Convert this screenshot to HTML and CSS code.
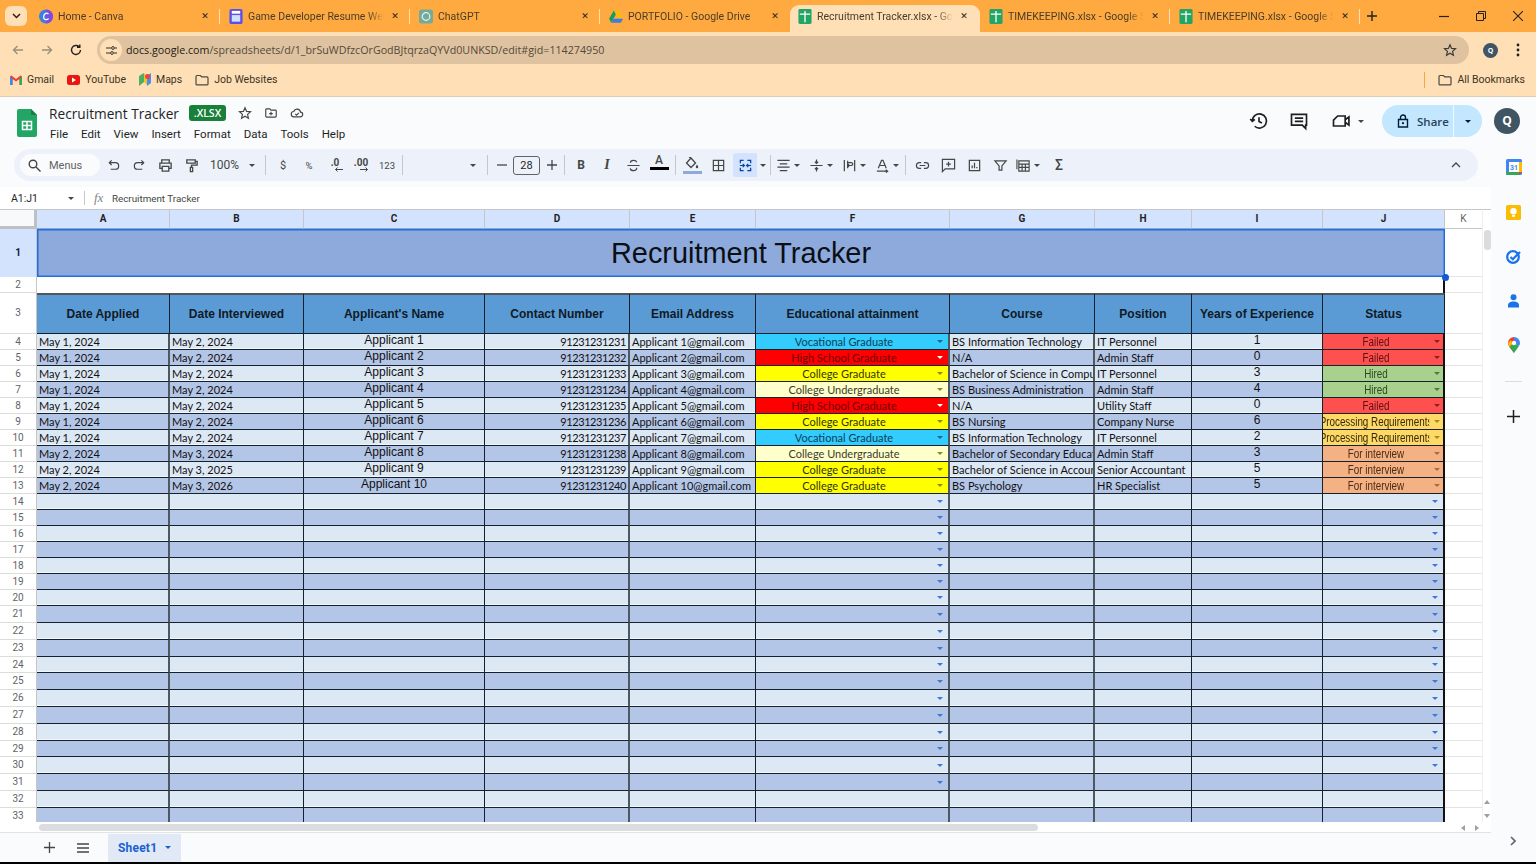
FILE: index.html
```html
<!DOCTYPE html>
<html lang="en">
<head>
    <meta charset="UTF-8">
    <title>Recruitment Tracker.xlsx - Google Sheets</title>
    <link rel="stylesheet" href="styles.css">
</head>
<body>
    <svg class="sprite" width="0" height="0">
        <symbol id="sheet-fav" viewBox="0 0 14 16"><rect width="14" height="16" rx="1.500" fill="#23a566"/><path d="M1.500 5.500h11M7 2v12" stroke="#fff" stroke-width="1.400" fill="none"/></symbol>
        <symbol id="folder" viewBox="0 0 14 12"><path d="M1 2.500c0-.6.4-1 1-1h3.400l1.300 1.400H12c.6 0 1 .4 1 1v6c0 .6-.4 1-1 1H2c-.6 0-1-.4-1-1z" fill="none" stroke="#4a4a44" stroke-width="1.200"/></symbol>
    </svg>

    <!-- browser chrome -->
    <div class="tabstrip">
        <div class="tab-menu"><svg width="9" height="6" viewBox="0 0 9 6"><path d="M1 1l3.500 3.500L8 1" fill="none" stroke="#222" stroke-width="1.500"/></svg></div>
        <div class="tab">
            <svg class="fav" viewBox="0 0 14 14"><circle cx="7" cy="7" r="7" fill="#3d7fe0"/><path d="M7 0a7 7 0 0 1 0 14z" fill="#7d4be0"/><path d="M9.400 4.600C8.400 3 5 3.400 4.600 7c-.3 3 3 4.200 5 2" fill="none" stroke="#fff" stroke-width="1.200"/></svg>
            <span class="tab-title">Home - Canva</span><span class="tab-x">✕</span>
        </div>
        <div class="tab">
            <svg class="fav" viewBox="0 0 14 16"><rect width="14" height="16" rx="2" fill="#5b4fe8"/><rect x="2.500" y="2" width="9" height="3" fill="#fff"/><rect x="2.500" y="6.500" width="9" height="7" fill="#cfe0ff"/></svg>
            <span class="tab-title">Game Developer Resume Website</span><span class="tab-x">✕</span>
        </div>
        <div class="tab">
            <svg class="fav" viewBox="0 0 14 14"><rect width="14" height="14" rx="2.500" fill="#74aa9c"/><circle cx="7" cy="7" r="3.800" fill="none" stroke="#e6f2ee" stroke-width="1.200"/></svg>
            <span class="tab-title">ChatGPT</span><span class="tab-x">✕</span>
        </div>
        <div class="tab no-line">
            <svg class="fav" viewBox="0 0 16 14"><path d="M5.500 0h5l5 9h-5z" fill="#fbbc04"/><path d="M5.500 0L0 9.500 2.500 14l5.300-9.300z" fill="#1a9c5b"/><path d="M2.500 14h11l2.500-4.500H5.200z" fill="#3b7de8"/></svg>
            <span class="tab-title">PORTFOLIO - Google Drive</span><span class="tab-x">✕</span>
        </div>
        <div class="tab active">
            <svg class="fav"><use href="#sheet-fav"/></svg>
            <span class="tab-title">Recruitment Tracker.xlsx - Google Sheets</span><span class="tab-x">✕</span>
        </div>
        <div class="tab">
            <svg class="fav"><use href="#sheet-fav"/></svg>
            <span class="tab-title">TIMEKEEPING.xlsx - Google Sheets</span><span class="tab-x">✕</span>
        </div>
        <div class="tab">
            <svg class="fav"><use href="#sheet-fav"/></svg>
            <span class="tab-title">TIMEKEEPING.xlsx - Google Sheets</span><span class="tab-x">✕</span>
        </div>
        <svg class="new-tab" width="10" height="10" viewBox="0 0 10 10"><path d="M5 0v10M0 5h10" stroke="#222" stroke-width="1.400"/></svg>
        <div class="win-ctrls">
            <svg width="10" height="10" viewBox="0 0 10 10"><path d="M0 5.500h10" stroke="#222" stroke-width="1.200"/></svg>
            <svg width="10" height="10" viewBox="0 0 10 10"><path d="M.5 2.500h7v7h-7zM2.500 2.500v-2h7v7h-2" fill="none" stroke="#222"/></svg>
            <svg width="10" height="10" viewBox="0 0 10 10"><path d="M0 0l10 10M10 0L0 10" stroke="#222" stroke-width="1.100"/></svg>
        </div>
    </div>

    <div class="navbar">
        <svg class="nav-ico" viewBox="0 0 12 12"><path d="M11 6H1.500M5.500 2L1.500 6l4 4" fill="none" stroke="#9a8f7e" stroke-width="1.400"/></svg>
        <svg class="nav-ico" viewBox="0 0 12 12"><path d="M1 6h9.500M6.500 2l4 4-4 4" fill="none" stroke="#9a8f7e" stroke-width="1.400"/></svg>
        <svg class="nav-ico" viewBox="0 0 12 12"><path d="M10.500 6a4.500 4.500 0 1 1-1.400-3.300M9.800 .6v2.700H7" fill="none" stroke="#222" stroke-width="1.400"/></svg>
        <div class="omnibox">
            <span class="site-btn"><svg width="11" height="9" viewBox="0 0 11 9"><path d="M0 2h5M8 7h3M0 7h4M9 2h2" stroke="#333" stroke-width="1.200"/><circle cx="7" cy="2" r="1.400" fill="none" stroke="#333"/><circle cx="6" cy="7" r="1.400" fill="none" stroke="#333"/></svg></span>
            <span class="url"><b>docs.google.com</b>/spreadsheets/d/1_brSuWDfzcOrGodBJtqrzaQYVd0UNKSD/edit#gid=114274950</span>
            <svg class="url-star" width="14" height="14" viewBox="0 0 24 24"><path d="M12 3l2.700 6.200 6.800.6-5.100 4.500 1.500 6.600L12 17.400l-5.900 3.500 1.500-6.600L2.500 9.800l6.800-.6z" fill="none" stroke="#3a3a3a" stroke-width="2"/></svg>
        </div>
        <span class="chrome-avatar">Q</span>
        <svg class="chrome-more" width="4" height="14" viewBox="0 0 4 14"><circle cx="2" cy="2" r="1.400"/><circle cx="2" cy="7" r="1.400"/><circle cx="2" cy="12" r="1.400"/></svg>
    </div>

    <div class="bookmarks">
        <span class="bm"><svg width="12" height="10" viewBox="0 0 12 10"><path d="M0 1.500V10h2.500V4L6 6.500 9.500 4v6H12V1.500L10.500.5 6 4 1.500.5z" fill="#ea4335"/><path d="M0 1.500V10h2.500V4z" fill="#4285f4"/><path d="M12 1.500V10H9.500V4z" fill="#34a853"/></svg>Gmail</span>
        <span class="bm"><svg width="13" height="10" viewBox="0 0 13 10"><rect width="13" height="10" rx="2.500" fill="#e8160f"/><path d="M5 2.500L9 5 5 7.500z" fill="#fff"/></svg>YouTube</span>
        <span class="bm"><svg width="12" height="14" viewBox="0 0 12 14"><path d="M0 3l5-3v9l-5 4z" fill="#4caf62"/><path d="M5 0l3 3v9L5 9z" fill="#f2c230"/><path d="M8 3l4-3v10l-4 3z" fill="#4a8cf0"/><circle cx="8.500" cy="3.500" r="2.500" fill="#e8453c"/></svg>Maps</span>
        <span class="bm"><svg width="14" height="12"><use href="#folder"/></svg>Job Websites</span>
        <span class="bm-sep"></span>
        <span class="bm"><svg width="14" height="12"><use href="#folder"/></svg>All Bookmarks</span>
    </div>

    <!-- sheets header -->
    <div class="app-head">
        <svg class="doc-icon" width="20" height="28" viewBox="0 0 20 28"><path d="M2 0h12l6 6v20a2 2 0 0 1-2 2H2a2 2 0 0 1-2-2V2a2 2 0 0 1 2-2z" fill="#23a566"/><path d="M14 0l6 6h-6z" fill="#188038"/><path d="M5.500 12.500h9v8h-9zM5.500 16.500h9M10 12.500v8" fill="none" stroke="#fff" stroke-width="1.500"/></svg>
        <div class="doc-info">
            <div class="doc-title-row">
                <span class="doc-title">Recruitment Tracker</span>
                <span class="xlsx">.XLSX</span>
                <svg class="head-ico" viewBox="0 0 24 24"><path d="M12 3l2.700 6.200 6.800.6-5.100 4.500 1.500 6.600L12 17.400l-5.900 3.500 1.500-6.600L2.500 9.800l6.800-.6z" fill="none" stroke="#444746" stroke-width="2"/></svg>
                <svg class="head-ico" viewBox="0 0 24 24"><path d="M3 6.500c0-.8.700-1.500 1.500-1.500H10l2 2h7.500c.8 0 1.500.7 1.500 1.500v9c0 .8-.7 1.500-1.500 1.500h-15C3.700 19 3 18.300 3 17.500zM9 13h6M12 10v6" fill="none" stroke="#444746" stroke-width="2"/></svg>
                <svg class="head-ico" viewBox="0 0 24 24"><path d="M7 18.500a4.500 4.500 0 0 1-.6-9A6 6 0 0 1 18 10.500a4 4 0 0 1-.5 8zM9 13.500l2.200 2.200 4-4" fill="none" stroke="#444746" stroke-width="2"/></svg>
            </div>
            <div class="menubar">
                <span>File</span><span>Edit</span><span>View</span><span>Insert</span><span>Format</span><span>Data</span><span>Tools</span><span>Help</span>
            </div>
        </div>
        <div class="head-right">
            <svg class="hr-ico" viewBox="0 0 24 24"><path d="M4 12a8.500 8.500 0 1 1 2.800 6.300M1.500 9.500L4 12.500l3-2.500M12 7.500V12.500l3.500 2" fill="none" stroke="#1f1f1f" stroke-width="2"/></svg>
            <svg class="hr-ico comment" viewBox="0 0 24 24"><path d="M3 4h18v13h-1v4l-4-4H3zM7 8.500h10M7 12.500h10" fill="none" stroke="#1f1f1f" stroke-width="2"/></svg>
            <svg class="hr-ico meet" viewBox="0 0 24 24"><path d="M8 6h9v12H3V11zM17 10.500l4.500-3.500v10L17 13.500" fill="none" stroke="#1f1f1f" stroke-width="2"/></svg>
            <i class="caret meet-caret"></i>
            <div class="share">
                <span class="share-main"><svg width="12" height="14" viewBox="0 0 12 14"><path d="M1.500 5.500h9v7.500h-9zM3.500 5.500V3.500a2.500 2.500 0 0 1 5 0v2" fill="none" stroke="#001d35" stroke-width="1.400"/><circle cx="6" cy="9.200" r="1.100" fill="#001d35"/></svg>Share</span>
                <span class="share-more"><i class="caret"></i></span>
            </div>
            <span class="avatar">Q</span>
        </div>
    </div>

    <div class="main">
        <div class="work">
            <div class="toolbar">
                <div class="search"><svg width="13" height="13" viewBox="0 0 13 13"><circle cx="5" cy="5" r="3.800" fill="none" stroke="#444746" stroke-width="1.400"/><path d="M8 8l4.500 4.500" stroke="#444746" stroke-width="1.400"/></svg>Menus</div>
                <span class="tb"><svg viewBox="0 0 16 16"><path d="M4 5h6a3 3 0 0 1 0 7H5M6 2.500L3.500 5 6 7.500" fill="none" stroke="#444746" stroke-width="1.300"/></svg></span>
                <span class="tb"><svg viewBox="0 0 16 16"><path d="M12 5H6a3 3 0 0 0 0 7h5M10 2.500L12.500 5 10 7.500" fill="none" stroke="#444746" stroke-width="1.300"/></svg></span>
                <span class="tb"><svg viewBox="0 0 16 16"><path d="M4 5V2h8v3M4 11H2V5.500h12V11h-2M4.500 9h7v5h-7z" fill="none" stroke="#444746" stroke-width="1.400"/></svg></span>
                <span class="tb"><svg viewBox="0 0 16 16"><path d="M3 2h9v3.500H3zM12 3.500h2v4H8V10M6.800 10h2.400v4.500H6.800z" fill="none" stroke="#444746" stroke-width="1.400"/></svg></span>
                <span class="tb zoom">100%<i class="caret"></i></span>
                <span class="tb-sep sep-a"></span>
                <span class="tb txt">$</span>
                <span class="tb txt small">%</span>
                <span class="tb txt dec">.0<svg width="9" height="5" viewBox="0 0 9 5"><path d="M9 2.500H1.500M3.500.5l-2 2 2 2" fill="none" stroke="#444746"/></svg></span>
                <span class="tb txt dec">.00<svg width="9" height="5" viewBox="0 0 9 5"><path d="M0 2.500h7.500M5.500.5l2 2-2 2" fill="none" stroke="#444746"/></svg></span>
                <span class="tb txt small">123</span>
                <span class="tb-sep"></span>
                <span class="font-pick"><i class="caret"></i></span>
                <span class="tb-sep sep-b"></span>
                <span class="tb step"><svg width="10" height="10" viewBox="0 0 10 10"><path d="M0 5h10" stroke="#444746" stroke-width="1.300"/></svg></span>
                <span class="size-box">28</span>
                <span class="tb step"><svg width="10" height="10" viewBox="0 0 10 10"><path d="M0 5h10M5 0v10" stroke="#444746" stroke-width="1.300"/></svg></span>
                <span class="tb-sep sep-c"></span>
                <span class="tb fmt bold">B</span>
                <span class="tb fmt ital">I</span>
                <span class="tb"><svg viewBox="0 0 16 16"><path d="M11.500 4.500C11 3 9.500 2.500 8 2.500S4.700 3.300 4.700 5M1.500 8h13M11.500 10.500c0 2-1.500 3-3.500 3s-3.300-1-3.500-2.500" fill="none" stroke="#444746" stroke-width="1.300"/></svg></span>
                <span class="tb fmt-a">A<i class="bar black"></i></span>
                <span class="tb-sep sep-c"></span>
                <span class="tb fill"><svg width="14" height="12" viewBox="0 0 14 12"><path d="M6 1L1.500 6 6 10.500 10.500 6zM4 0l2 1" fill="none" stroke="#444746" stroke-width="1.300"/><path d="M12 7.500c-1 1.500-1.200 2-1.200 2.500a1.200 1.200 0 0 0 2.400 0c0-.5-.2-1-1.200-2.500z" fill="#444746"/></svg><i class="bar blue"></i></span>
                <span class="tb"><svg viewBox="0 0 16 16"><path d="M2.500 2.500h11v11h-11zM8 2.500v11M2.500 8h11" fill="none" stroke="#444746" stroke-width="1.300"/></svg></span>
                <span class="tb merge"><svg viewBox="0 0 16 16"><path d="M6 2.500H2.500v3M10 2.500h3.500v3M6 13.500H2.500v-3M10 13.500h3.500v-3M2 8h4.500M5 6.300L6.800 8 5 9.700M14 8H9.500M11 6.300L9.200 8 11 9.700" fill="none" stroke="#0842a0" stroke-width="1.300"/></svg></span>
                <span class="tb-arrow merge-arrow"><i class="caret"></i></span>
                <span class="tb-sep sep-d"></span>
                <span class="tb with-caret"><svg viewBox="0 0 16 16"><path d="M1.500 2.500h13M4 6.200h8M1.500 9.800h13M4 13.500h8" fill="none" stroke="#444746" stroke-width="1.300"/></svg><i class="caret"></i></span>
                <span class="tb with-caret"><svg viewBox="0 0 16 16"><path d="M1.500 8h13M8 1.500v4M6.300 4L8 5.800 9.700 4M8 14.500v-4M6.300 12L8 10.200 9.700 12" fill="none" stroke="#444746" stroke-width="1.300"/></svg><i class="caret"></i></span>
                <span class="tb with-caret"><svg viewBox="0 0 16 16"><path d="M2.500 2v12M13.500 2v12M6 8h4a1.500 1.500 0 0 0 0-3H6M6 11V3M7.500 6.500L6 8l1.500 1.500" fill="none" stroke="#444746" stroke-width="1.300"/></svg><i class="caret"></i></span>
                <span class="tb with-caret"><svg viewBox="0 0 16 16"><path d="M3.500 11L7 2.500h1.500L12 11M5 8h5.500M2 14h11M11.500 12.500L13.500 14l-2 1.500" fill="none" stroke="#444746" stroke-width="1.300"/></svg><i class="caret"></i></span>
                <span class="tb-sep sep-e"></span>
                <span class="tb"><svg viewBox="0 0 16 16"><path d="M6.500 5H4.500a3 3 0 0 0 0 6h2M9.500 5h2a3 3 0 0 1 0 6h-2M5 8h6" fill="none" stroke="#444746" stroke-width="1.300"/></svg></span>
                <span class="tb"><svg viewBox="0 0 16 16"><path d="M1.500 1.500h13v10H4.500l-3 3zM8 4v5M5.500 6.500h5" fill="none" stroke="#444746" stroke-width="1.300"/></svg></span>
                <span class="tb"><svg viewBox="0 0 16 16"><path d="M2.500 2.500h11v11h-11zM5.500 11V8M8 11V5M10.500 11V9.500" fill="none" stroke="#444746" stroke-width="1.300"/></svg></span>
                <span class="tb"><svg viewBox="0 0 16 16"><path d="M2 3h12L9.500 8.500V13h-3V8.500z" fill="none" stroke="#444746" stroke-width="1.300"/></svg></span>
                <span class="tb with-caret func"><svg viewBox="0 0 16 16"><path d="M3 3h11v11H3zM3 6.500h11M6.500 6.500V14M10 6.500V14M3 10h11M1 1.500V12" fill="none" stroke="#444746" stroke-width="1.200"/></svg><i class="caret"></i></span>
                <span class="tb sigma">Σ</span>
                <svg class="collapse" width="10" height="6" viewBox="0 0 10 6"><path d="M1 5l4-4 4 4" fill="none" stroke="#444746" stroke-width="1.300"/></svg>
            </div>

            <div class="formula">
                <span class="name-box">A1:J1</span><i class="caret"></i>
                <span class="fx-sep"></span>
                <span class="fx">fx</span>
                <span class="formula-text">Recruitment Tracker</span>
            </div>

            <div class="grid-row">
                <div class="grid-wrap">
                    <table class="sheet">
                        <colgroup>
                            <col class="c0"><col class="ca"><col class="cb"><col class="cc"><col class="cd"><col class="ce"><col class="cf"><col class="cg"><col class="ch"><col class="ci"><col class="cj"><col class="ck">
                        </colgroup>
                        <tr class="cols">
                            <th class="corner"></th><th>A</th><th>B</th><th>C</th><th>D</th><th>E</th><th>F</th><th>G</th><th>H</th><th>I</th><th>J</th><th class="k">K</th>
                        </tr>
                        <tr class="r1"><th class="sel">1</th><td colspan="10" class="title-cell">Recruitment Tracker</td><td class="k"></td></tr>
                        <tr class="r2"><th>2</th><td colspan="10"></td><td class="k"></td></tr>
                        <tr class="r3"><th>3</th><td>Date Applied</td><td>Date Interviewed</td><td>Applicant's Name</td><td>Contact Number</td><td>Email Address</td><td>Educational attainment</td><td>Course</td><td>Position</td><td>Years of Experience</td><td>Status</td><td class="k"></td></tr>

                        <tr class="lt"><th>4</th><td class="s">May 1, 2024</td><td class="s">May 2, 2024</td><td class="a">Applicant 1</td><td class="s n">91231231231</td><td class="s">Applicant 1@gmail.com</td><td class="edu voc"><div class="dd"><span>Vocational Graduate</span><i class="caret"></i></div></td><td class="s">BS Information Technology</td><td class="s">IT Personnel</td><td class="a">1</td><td class="st failed"><div class="dd"><span>Failed</span><i class="caret"></i></div></td><td class="k"></td></tr>
                        <tr class="dk"><th>5</th><td class="s">May 1, 2024</td><td class="s">May 2, 2024</td><td class="a">Applicant 2</td><td class="s n">91231231232</td><td class="s">Applicant 2@gmail.com</td><td class="edu hs"><div class="dd"><span>High School Graduate</span><i class="caret"></i></div></td><td class="s">N/A</td><td class="s">Admin Staff</td><td class="a">0</td><td class="st failed"><div class="dd"><span>Failed</span><i class="caret"></i></div></td><td class="k"></td></tr>
                        <tr class="lt"><th>6</th><td class="s">May 1, 2024</td><td class="s">May 2, 2024</td><td class="a">Applicant 3</td><td class="s n">91231231233</td><td class="s">Applicant 3@gmail.com</td><td class="edu cg"><div class="dd"><span>College Graduate</span><i class="caret"></i></div></td><td class="s">Bachelor of Science in Computer Science</td><td class="s">IT Personnel</td><td class="a">3</td><td class="st hired"><div class="dd"><span>Hired</span><i class="caret"></i></div></td><td class="k"></td></tr>
                        <tr class="dk"><th>7</th><td class="s">May 1, 2024</td><td class="s">May 2, 2024</td><td class="a">Applicant 4</td><td class="s n">91231231234</td><td class="s">Applicant 4@gmail.com</td><td class="edu cu"><div class="dd"><span>College Undergraduate</span><i class="caret"></i></div></td><td class="s">BS Business Administration</td><td class="s">Admin Staff</td><td class="a">4</td><td class="st hired"><div class="dd"><span>Hired</span><i class="caret"></i></div></td><td class="k"></td></tr>
                        <tr class="lt"><th>8</th><td class="s">May 1, 2024</td><td class="s">May 2, 2024</td><td class="a">Applicant 5</td><td class="s n">91231231235</td><td class="s">Applicant 5@gmail.com</td><td class="edu hs"><div class="dd"><span>High School Graduate</span><i class="caret"></i></div></td><td class="s">N/A</td><td class="s">Utility Staff</td><td class="a">0</td><td class="st failed"><div class="dd"><span>Failed</span><i class="caret"></i></div></td><td class="k"></td></tr>
                        <tr class="dk"><th>9</th><td class="s">May 1, 2024</td><td class="s">May 2, 2024</td><td class="a">Applicant 6</td><td class="s n">91231231236</td><td class="s">Applicant 6@gmail.com</td><td class="edu cg"><div class="dd"><span>College Graduate</span><i class="caret"></i></div></td><td class="s">BS Nursing</td><td class="s">Company Nurse</td><td class="a">6</td><td class="st proc"><div class="dd"><span>Processing Requirements</span><i class="caret"></i></div></td><td class="k"></td></tr>
                        <tr class="lt"><th>10</th><td class="s">May 1, 2024</td><td class="s">May 2, 2024</td><td class="a">Applicant 7</td><td class="s n">91231231237</td><td class="s">Applicant 7@gmail.com</td><td class="edu voc"><div class="dd"><span>Vocational Graduate</span><i class="caret"></i></div></td><td class="s">BS Information Technology</td><td class="s">IT Personnel</td><td class="a">2</td><td class="st proc"><div class="dd"><span>Processing Requirements</span><i class="caret"></i></div></td><td class="k"></td></tr>
                        <tr class="dk"><th>11</th><td class="s">May 2, 2024</td><td class="s">May 3, 2024</td><td class="a">Applicant 8</td><td class="s n">91231231238</td><td class="s">Applicant 8@gmail.com</td><td class="edu cu"><div class="dd"><span>College Undergraduate</span><i class="caret"></i></div></td><td class="s">Bachelor of Secondary Education</td><td class="s">Admin Staff</td><td class="a">3</td><td class="st inter"><div class="dd"><span>For interview</span><i class="caret"></i></div></td><td class="k"></td></tr>
                        <tr class="lt"><th>12</th><td class="s">May 2, 2024</td><td class="s">May 3, 2025</td><td class="a">Applicant 9</td><td class="s n">91231231239</td><td class="s">Applicant 9@gmail.com</td><td class="edu cg"><div class="dd"><span>College Graduate</span><i class="caret"></i></div></td><td class="s">Bachelor of Science in Accountancy</td><td class="s">Senior Accountant</td><td class="a">5</td><td class="st inter"><div class="dd"><span>For interview</span><i class="caret"></i></div></td><td class="k"></td></tr>
                        <tr class="dk"><th>13</th><td class="s">May 2, 2024</td><td class="s">May 3, 2026</td><td class="a">Applicant 10</td><td class="s n">91231231240</td><td class="s">Applicant 10@gmail.com</td><td class="edu cg"><div class="dd"><span>College Graduate</span><i class="caret"></i></div></td><td class="s">BS Psychology</td><td class="s">HR Specialist</td><td class="a">5</td><td class="st inter"><div class="dd"><span>For interview</span><i class="caret"></i></div></td><td class="k"></td></tr>

                        <tr class="lt"><th>14</th><td></td><td></td><td></td><td></td><td></td><td><div class="dd"><span></span><i class="caret"></i></div></td><td></td><td></td><td></td><td><div class="dd"><span></span><i class="caret"></i></div></td><td class="k"></td></tr>
                        <tr class="dk"><th>15</th><td></td><td></td><td></td><td></td><td></td><td><div class="dd"><span></span><i class="caret"></i></div></td><td></td><td></td><td></td><td><div class="dd"><span></span><i class="caret"></i></div></td><td class="k"></td></tr>
                        <tr class="lt"><th>16</th><td></td><td></td><td></td><td></td><td></td><td><div class="dd"><span></span><i class="caret"></i></div></td><td></td><td></td><td></td><td><div class="dd"><span></span><i class="caret"></i></div></td><td class="k"></td></tr>
                        <tr class="dk"><th>17</th><td></td><td></td><td></td><td></td><td></td><td><div class="dd"><span></span><i class="caret"></i></div></td><td></td><td></td><td></td><td><div class="dd"><span></span><i class="caret"></i></div></td><td class="k"></td></tr>
                        <tr class="lt"><th>18</th><td></td><td></td><td></td><td></td><td></td><td><div class="dd"><span></span><i class="caret"></i></div></td><td></td><td></td><td></td><td><div class="dd"><span></span><i class="caret"></i></div></td><td class="k"></td></tr>
                        <tr class="dk"><th>19</th><td></td><td></td><td></td><td></td><td></td><td><div class="dd"><span></span><i class="caret"></i></div></td><td></td><td></td><td></td><td><div class="dd"><span></span><i class="caret"></i></div></td><td class="k"></td></tr>
                        <tr class="lt"><th>20</th><td></td><td></td><td></td><td></td><td></td><td><div class="dd"><span></span><i class="caret"></i></div></td><td></td><td></td><td></td><td><div class="dd"><span></span><i class="caret"></i></div></td><td class="k"></td></tr>
                        <tr class="dk tall"><th>21</th><td></td><td></td><td></td><td></td><td></td><td><div class="dd"><span></span><i class="caret"></i></div></td><td></td><td></td><td></td><td><div class="dd"><span></span><i class="caret"></i></div></td><td class="k"></td></tr>
                        <tr class="lt tall"><th>22</th><td></td><td></td><td></td><td></td><td></td><td><div class="dd"><span></span><i class="caret"></i></div></td><td></td><td></td><td></td><td><div class="dd"><span></span><i class="caret"></i></div></td><td class="k"></td></tr>
                        <tr class="dk tall"><th>23</th><td></td><td></td><td></td><td></td><td></td><td><div class="dd"><span></span><i class="caret"></i></div></td><td></td><td></td><td></td><td><div class="dd"><span></span><i class="caret"></i></div></td><td class="k"></td></tr>
                        <tr class="lt"><th>24</th><td></td><td></td><td></td><td></td><td></td><td><div class="dd"><span></span><i class="caret"></i></div></td><td></td><td></td><td></td><td><div class="dd"><span></span><i class="caret"></i></div></td><td class="k"></td></tr>
                        <tr class="dk tall"><th>25</th><td></td><td></td><td></td><td></td><td></td><td><div class="dd"><span></span><i class="caret"></i></div></td><td></td><td></td><td></td><td><div class="dd"><span></span><i class="caret"></i></div></td><td class="k"></td></tr>
                        <tr class="lt tall"><th>26</th><td></td><td></td><td></td><td></td><td></td><td><div class="dd"><span></span><i class="caret"></i></div></td><td></td><td></td><td></td><td><div class="dd"><span></span><i class="caret"></i></div></td><td class="k"></td></tr>
                        <tr class="dk tall"><th>27</th><td></td><td></td><td></td><td></td><td></td><td><div class="dd"><span></span><i class="caret"></i></div></td><td></td><td></td><td></td><td><div class="dd"><span></span><i class="caret"></i></div></td><td class="k"></td></tr>
                        <tr class="lt tall"><th>28</th><td></td><td></td><td></td><td></td><td></td><td><div class="dd"><span></span><i class="caret"></i></div></td><td></td><td></td><td></td><td><div class="dd"><span></span><i class="caret"></i></div></td><td class="k"></td></tr>
                        <tr class="dk"><th>29</th><td></td><td></td><td></td><td></td><td></td><td><div class="dd"><span></span><i class="caret"></i></div></td><td></td><td></td><td></td><td><div class="dd"><span></span><i class="caret"></i></div></td><td class="k"></td></tr>
                        <tr class="lt tall"><th>30</th><td></td><td></td><td></td><td></td><td></td><td><div class="dd"><span></span><i class="caret"></i></div></td><td></td><td></td><td></td><td><div class="dd"><span></span><i class="caret"></i></div></td><td class="k"></td></tr>
                        <tr class="dk tall"><th>31</th><td></td><td></td><td></td><td></td><td></td><td><div class="dd"><span></span><i class="caret"></i></div></td><td></td><td></td><td></td><td></td><td class="k"></td></tr>
                        <tr class="lt tall"><th>32</th><td></td><td></td><td></td><td></td><td></td><td></td><td></td><td></td><td></td><td></td><td class="k"></td></tr>
                        <tr class="dk"><th>33</th><td></td><td></td><td></td><td></td><td></td><td></td><td></td><td></td><td></td><td></td><td class="k"></td></tr>
                    </table>
                    <span class="handle"></span>
                </div>
                <div class="vscroll">
                    <span class="vthumb"></span>
                    <span class="varrow up"></span>
                    <span class="varrow down"></span>
                </div>
            </div>

            <div class="hscroll">
                <span class="hthumb"></span>
                <span class="harrow left"></span>
                <span class="harrow right"></span>
            </div>
        </div>

        <div class="side">
            <svg width="16" height="16" viewBox="0 0 16 16"><rect width="16" height="16" rx="1.500" fill="#4285f4"/><rect x="3" y="3" width="10" height="10" fill="#fff"/><path d="M0 13h13v3H1.500A1.500 1.500 0 0 1 0 14.500z" fill="#34a853"/><path d="M13 3h3v10h-3z" fill="#fbbc04"/><path d="M13 13h3l-3 3z" fill="#ea4335"/><text x="8" y="10.500" class="cal-num">31</text></svg>
            <svg width="15" height="15" viewBox="0 0 15 15"><rect width="15" height="15" rx="1.500" fill="#fbbc04"/><circle cx="7.500" cy="6.300" r="3.200" fill="#fff"/><rect x="6" y="10" width="3" height="1.800" fill="#fff"/></svg>
            <svg width="15" height="15" viewBox="0 0 15 15"><circle cx="7" cy="8" r="5.800" fill="none" stroke="#1a73e8" stroke-width="2.200"/><path d="M4.500 8l2.300 2.300L14 3" fill="none" stroke="#1a73e8" stroke-width="2.200"/></svg>
            <svg width="13" height="14" viewBox="0 0 13 14"><circle cx="6.500" cy="3.300" r="3" fill="#1a73e8"/><path d="M1 13.500v-2.500c0-2 2.500-3.500 5.500-3.500s5.500 1.500 5.500 3.500v2.500z" fill="#1a73e8"/></svg>
            <svg width="12" height="16" viewBox="0 0 12 16"><path d="M6 0a6 6 0 0 0-6 6c0 1.500.5 2.500 1.300 3.700L6 16V0z" fill="#ea4335"/><path d="M6 0a6 6 0 0 1 6 6c0 1-.4 2-1 3L6 6z" fill="#4285f4"/><path d="M1.300 9.700L6 16l5-7-3-2-3 0z" fill="#34a853"/><path d="M0 6l1.300 3.700L4.500 7 3 3z" fill="#fbbc04"/><circle cx="6" cy="6" r="2.200" fill="#fff"/></svg>
            <span class="side-sep"></span>
            <svg width="13" height="13" viewBox="0 0 13 13"><path d="M6.500 0v13M0 6.500h13" stroke="#1f1f1f" stroke-width="1.500"/></svg>
        </div>
    </div>

    <div class="sheetbar">
        <svg class="sb-ico" width="11" height="11" viewBox="0 0 11 11"><path d="M5.500 0v11M0 5.500h11" stroke="#444746" stroke-width="1.300"/></svg>
        <svg class="sb-ico menu" width="12" height="10" viewBox="0 0 12 10"><path d="M0 1h12M0 5h12M0 9h12" stroke="#444746" stroke-width="1.400"/></svg>
        <div class="sheet-tab">Sheet1<i class="caret"></i></div>
        <svg class="sb-chev" width="6" height="10" viewBox="0 0 6 10"><path d="M1 1l4 4-4 4" fill="none" stroke="#5f6368" stroke-width="1.600"/></svg>
    </div>
    <div class="bottom-edge"></div>
</body>
</html>
```

FILE: styles.css
```css
* {
    box-sizing: border-box;
}
html, body {
    margin: 0;
    height: 100%;
}
body {
    width: 1536px;
    height: 864px;
    overflow: hidden;
    display: flex;
    flex-direction: column;
    font-family: "Open Sans", "Liberation Sans", sans-serif;
    color: #1f1f1f;
    background: #f9fbfd;
}
.sprite {
    position: absolute;
}
.caret {
    display: inline-block;
    width: 0;
    height: 0;
    border-left: 3.5px solid transparent;
    border-right: 3.5px solid transparent;
    border-top: 3.5px solid #444746;
    flex: none;
}

/* browser chrome */
.tabstrip {
    height: 32px;
    flex: none;
    display: flex;
    align-items: flex-end;
    background: #ffaa40;
    padding-left: 5px;
}
.tab-menu {
    width: 22px;
    height: 20px;
    margin: 0 3px 6px 0;
    border-radius: 6px;
    background: #ffdfb5;
    display: flex;
    align-items: center;
    justify-content: center;
}
.tab {
    width: 190px;
    height: 27px;
    display: flex;
    align-items: center;
    padding: 0 7px 5px 9px;
    font-family: Roboto, sans-serif;
    font-size: 10.5px;
    color: #4a3c28;
    position: relative;
}
.tab::after {
    content: "";
    position: absolute;
    right: 0;
    top: 4px;
    width: 1px;
    height: 15px;
    background: #ffe0b5;
}
.tab.no-line::after,
.tab.active::after {
    display: none;
}
.tab.active {
    background: #ffdfb5;
    border-radius: 9px 9px 0 0;
    padding-left: 8px;
    padding-right: 8px;
}
.fav {
    width: 14px;
    height: 15px;
    flex: none;
    margin-right: 5px;
}
.tab-title {
    flex: 1;
    min-width: 0;
    white-space: nowrap;
    overflow: hidden;
    -webkit-mask-image: linear-gradient(90deg, #000 88%, transparent);
    mask-image: linear-gradient(90deg, #000 88%, transparent);
}
.tab-x {
    flex: none;
    width: 14px;
    margin-left: 4px;
    margin-right: 1px;
    text-align: center;
    font-size: 9px;
    font-family: "DejaVu Sans", sans-serif;
    color: #222;
}
.new-tab {
    margin: 0 0 11px 7px;
}
.win-ctrls {
    margin-left: auto;
    width: 84px;
    margin-right: 13px;
    margin-bottom: 11px;
    display: flex;
    justify-content: space-between;
}
.navbar {
    height: 33px;
    flex: none;
    display: flex;
    align-items: center;
    background: #ffdfb5;
    padding: 3px 0 0 12px;
}
.nav-ico {
    width: 12px;
    height: 12px;
    margin-right: 17px;
}
.omnibox {
    width: 1372px;
    height: 28px;
    margin-left: -2px;
    background: #dfc3a0;
    border-radius: 14px;
    display: flex;
    align-items: center;
    padding: 0 12px 0 3px;
    font-size: 10.7px;
    color: #55493a;
}
.site-btn {
    width: 22px;
    height: 22px;
    border-radius: 50%;
    background: #ffdfb5;
    display: flex;
    align-items: center;
    justify-content: center;
    margin-right: 4px;
}
.url {
    white-space: nowrap;
}
.url b {
    font-weight: 400;
    color: #1f1a12;
}
.url-star {
    margin-left: auto;
}
.chrome-avatar {
    width: 15px;
    height: 15px;
    margin-left: 14px;
    border-radius: 50%;
    background: #3f5563;
    color: #fff;
    font-size: 7px;
    font-weight: 700;
    text-align: center;
    line-height: 15px;
}
.chrome-more {
    margin-left: 18px;
    fill: #222;
}
.bookmarks {
    height: 32px;
    flex: none;
    display: flex;
    align-items: center;
    background: #ffdfb5;
    border-bottom: 1px solid #d9cdbb;
    padding: 0 0 2px 10px;
    font-family: Roboto, sans-serif;
    font-size: 10.5px;
    color: #3d3325;
}
.bm {
    display: flex;
    align-items: center;
    gap: 5px;
    margin-right: 13px;
    white-space: nowrap;
}
.bm-sep {
    width: 1px;
    height: 16px;
    background: #f5a742;
    margin-left: auto;
    margin-right: 13px;
}
.bm:last-child {
    margin-right: 11px;
}

/* sheets header */
.app-head {
    height: 52px;
    flex: none;
    display: flex;
    padding-left: 17px;
    position: relative;
}
.doc-icon {
    margin-top: 12px;
}
.doc-info {
    margin-left: 12px;
}
.doc-title-row {
    display: flex;
    align-items: center;
    height: 20px;
    margin-top: 6px;
}
.doc-title {
    font-size: 13.7px;
    font-family: "Open Sans", sans-serif;
    color: #1f1f1f;
    white-space: nowrap;
}
.xlsx {
    margin-left: 10px;
    height: 16px;
    width: 37px;
    background: #188038;
    border-radius: 3px;
    color: #fff;
    font-size: 10.5px;
    font-weight: 600;
    line-height: 16px;
    text-align: center;
}
.head-ico {
    width: 14px;
    height: 14px;
    margin-left: 12px;
}
.menubar {
    display: flex;
    font-size: 11.5px;
    font-family: Roboto, sans-serif;
    color: #1f1f1f;
    margin-top: 4px;
    margin-left: 1px;
}
.menubar span {
    margin-right: 13px;
}
.head-right {
    margin-left: auto;
    display: flex;
    align-items: center;
    height: 48px;
    padding-right: 16px;
}
.hr-ico {
    width: 20px;
    height: 20px;
    margin-right: 20px;
}
.hr-ico.comment {
    margin-right: 22px;
}
.hr-ico.meet {
    margin-right: 7px;
}
.meet-caret {
    margin-right: 18px;
}
.share {
    width: 100px;
    height: 32px;
    display: flex;
    border-radius: 16px;
    overflow: hidden;
    font-size: 11.5px;
    font-weight: 600;
    color: #2a4356;
}
.share-main {
    width: 72px;
    background: #c2e7ff;
    display: flex;
    align-items: center;
    gap: 8px;
    padding-left: 15px;
    border-right: 1px solid #f0f8ff;
}
.share-more {
    flex: 1;
    background: #c2e7ff;
    display: flex;
    align-items: center;
    justify-content: center;
}
.share-more .caret {
    border-top-color: #001d35;
}
.avatar {
    width: 26px;
    height: 26px;
    margin-left: 12px;
    border-radius: 50%;
    background: #3f5563;
    color: #fff;
    font-size: 12px;
    font-weight: 700;
    text-align: center;
    line-height: 26px;
}

.main {
    flex: 1;
    min-height: 0;
    display: flex;
}
.work {
    width: 1491px;
    display: flex;
    flex-direction: column;
}

/* toolbar */
.toolbar {
    width: 1464px;
    height: 32px;
    margin-left: 14px;
    flex: none;
    background: #edf2fa;
    border-radius: 16px;
    display: flex;
    align-items: center;
    padding-left: 6px;
    color: #444746;
    font-family: Roboto, sans-serif;
}
.search {
    width: 80px;
    height: 22px;
    border-radius: 11px;
    background: #f9fbfd;
    display: flex;
    align-items: center;
    gap: 8px;
    padding-left: 8px;
    font-size: 11px;
    color: #5f6368;
    flex: none;
}
.tb {
    width: 26px;
    height: 24px;
    flex: none;
    display: flex;
    align-items: center;
    justify-content: center;
    position: relative;
    font-size: 11px;
}
.tb svg {
    width: 15px;
    height: 15px;
    flex: none;
}
.tb.zoom {
    width: 58px;
    font-size: 12px;
    justify-content: flex-start;
    padding-left: 6px;
    gap: 10px;
}
.tb-sep {
    width: 1px;
    height: 20px;
    background: #c7c7c7;
    flex: none;
    margin: 0 1.5px;
}
.sep-a {
    margin: 0 4px 0 3px;
}
.sep-b {
    margin: 0 4.5px;
}
.sep-c {
    margin: 0 3px;
}
.sep-d {
    margin: 0 0 0 1px;
}
.sep-e {
    margin: 0 3px 0 2px;
}
.txt {
    font-size: 11px;
}
.txt.small {
    font-size: 9.5px;
}
.tb.dec {
    flex-direction: column;
    font-size: 10px;
    font-weight: 700;
    line-height: 8px;
}
.tb.dec svg {
    width: 9px;
    height: 5px;
    margin-left: 6px;
}
.font-pick {
    width: 78px;
    flex: none;
    display: flex;
    justify-content: flex-end;
    padding-right: 6px;
}
.tb.step {
    width: 19px;
}
.tb.step svg {
    width: 10px;
    height: 10px;
}
.size-box {
    width: 27px;
    height: 19px;
    margin: 0 2px;
    flex: none;
    border: 1px solid #5f6368;
    border-radius: 3px;
    font-size: 11px;
    line-height: 17px;
    text-align: center;
    color: #1f1f1f;
}
.fmt {
    font-size: 12px;
    font-family: "Liberation Serif", serif;
}
.bold {
    font-family: Roboto, sans-serif;
    font-weight: 700;
}
.ital {
    font-style: italic;
    font-size: 14px;
    font-weight: 700;
}
.fmt-a {
    flex-direction: column;
    justify-content: flex-start;
    font-size: 12px;
    line-height: 14px;
    font-weight: 500;
}
.bar {
    display: block;
    width: 19px;
    height: 3px;
    flex: none;
}
.bar.black {
    background: #000;
}
.bar.blue {
    background: #8ea9db;
    margin-top: 2px;
}
.tb.fill {
    flex-direction: column;
}
.tb.fill svg {
    width: 14px;
    height: 12px;
}
.tb.merge {
    width: 24px;
    margin-left: 2px;
    border-radius: 3px 0 0 3px;
    background: #d3e3fd;
}
.tb-arrow {
    width: 12px;
    height: 24px;
    flex: none;
    display: flex;
    align-items: center;
    justify-content: center;
}
.with-caret {
    width: 33px;
    justify-content: flex-start;
    padding-left: 5px;
    gap: 3px;
}
.func {
    width: 33px;
    padding-left: 3px;
}
.sigma {
    font-size: 14px;
    font-weight: 500;
}
.collapse {
    margin-left: auto;
    margin-right: 17px;
}

/* formula bar */
.formula {
    height: 22px;
    margin-top: 6px;
    flex: none;
    background: #fff;
    display: flex;
    align-items: center;
    font-family: Roboto, sans-serif;
    font-size: 9.8px;
    color: #444746;
}
.name-box {
    width: 68px;
    padding-left: 11px;
    font-size: 10.5px;
    color: #1f1f1f;
}
.fx-sep {
    width: 1px;
    height: 14px;
    background: #c7c7c7;
    margin-left: 10px;
}
.fx {
    margin-left: 9px;
    width: 18px;
    font-family: "Liberation Serif", serif;
    font-style: italic;
    font-size: 13px;
    color: #80868b;
}
.formula-text {
    white-space: nowrap;
}

/* grid */
.grid-row {
    height: 613px;
    flex: none;
    display: flex;
    background: #fff;
}
.grid-wrap {
    width: 1482px;
    height: 613px;
    overflow: hidden;
    position: relative;
    border-top: 1px solid #c7c7c7;
}
.sheet {
    width: 1482px;
    table-layout: fixed;
    border-collapse: separate;
    border-spacing: 0;
}
.c0 { width: 37px; }
.ca { width: 133px; }
.cb { width: 134px; }
.cc { width: 181px; }
.cd { width: 145px; }
.ce { width: 126px; }
.cf { width: 194px; }
.cg { width: 145px; }
.ch { width: 97px; }
.ci { width: 131px; }
.cj { width: 122px; }
.ck { width: 37px; }

.sheet th,
.sheet td {
    padding: 0;
    height: 16px;
    overflow: hidden;
    white-space: nowrap;
}
.sheet th {
    font-family: Roboto, sans-serif;
    font-size: 10px;
    font-weight: 400;
    color: #5f6368;
    background: #fff;
    border-right: 1px solid #c4c7c5;
    border-bottom: 1px solid #dcdcdc;
    line-height: 12px;
}
.cols th {
    height: 19px;
    background: #d3e3fd;
    color: #1f1f1f;
    font-weight: 700;
    border-right: 1px solid #c4c7c5;
    border-bottom: 1px solid #8fa8d0;
}
.cols th.corner {
    background: #f8f9fa;
    border-right: 3px solid #bdc1c6;
    border-bottom: 3px solid #bdc1c6;
}
.cols th.k {
    background: #fff;
    color: #5f6368;
    font-weight: 400;
    border-right: 0;
    border-bottom: 1px solid #c4c7c5;
}
.sheet td.k {
    background: #fff;
    box-shadow: none;
    border-right: 0;
    border-bottom: 1px solid #e2e3e3;
}
.sheet th.sel {
    background: #d3e3fd;
    color: #041e49;
    font-weight: 700;
    border-bottom: 0;
}
.r1 td.title-cell {
    height: 48px;
    background: #8ea9db;
    box-shadow: inset 0 0 0 1.5px #1f6fe0;
    font-family: "Liberation Sans", sans-serif;
    font-size: 28.9px;
    color: #0a0f16;
    text-align: center;
}
.r2 td {
    background: #fff;
    border-right: 2px solid #111;
}
.r3 th,
.r3 td {
    height: 41px;
}
.r3 td {
    background: #5b9bd5;
    border-top: 2px solid #555;
    border-right: 1px solid #12202c;
    border-bottom: 1px solid #12202c;
    text-align: center;
    font-family: "Liberation Sans", sans-serif;
    font-size: 12px;
    font-weight: 700;
    color: #0f1a25;
}
.r3 td.k {
    border-top: 0;
}

/* data rows */
.lt td {
    background: #dde8f5;
    box-shadow: inset 0 -1px 0 #f3f7fb;
}
.dk td {
    background: #b4c6e7;
}
.lt td,
.dk td {
    border-right: 1px solid #15212c;
    border-bottom: 1px solid #15212c;
    line-height: 14px;
}
.tall th,
.tall td {
    height: 17px;
}
.lt td:nth-child(2),
.dk td:nth-child(2),
.lt td:nth-child(5),
.dk td:nth-child(5),
.lt td:nth-child(7),
.dk td:nth-child(7),
.lt td:nth-child(8),
.dk td:nth-child(8) {
    border-right: 2px solid #4d5861;
}
.lt td:nth-child(11),
.dk td:nth-child(11) {
    border-right: 2px solid #111;
}
.s {
    font-family: Lato, "Open Sans", sans-serif;
    font-size: 11px;
    color: #111;
    padding: 1px 2px 0 !important;
}
.n {
    text-align: right;
    letter-spacing: -.4px;
}
.sheet .a {
    font-family: "Liberation Sans", sans-serif;
    font-size: 12px;
    line-height: 13px;
    color: #111;
    text-align: center;
    padding-bottom: 2px;
}
.dd {
    display: flex;
    align-items: center;
    height: 14px;
    padding-right: 5px;
}
.dd span {
    flex: 1;
    min-width: 0;
    display: flex;
    justify-content: center;
    overflow: hidden;
    white-space: nowrap;
}
.dd .caret {
    margin-left: 5px;
    border-top-color: #3d78d8;
}
.edu {
    font-family: Lato, "Open Sans", sans-serif;
    font-size: 11px;
}
.voc { color: #0a3f55; }
.voc.voc { background: #33ccff; box-shadow: none; }
.voc .dd .caret { border-top-color: #1f6485; }
.hs { color: #6e0404; }
.hs.hs { background: #ff0000; box-shadow: none; }
.hs .dd .caret { border-top-color: #fff; }
.cg { color: #33330a; }
.cg.cg { background: #ffff00; box-shadow: none; }
.cg .dd .caret { border-top-color: #8c8c1e; }
.cu { color: #3c3c2c; }
.cu.cu { background: #ffffcc; box-shadow: none; }
.cu .dd .caret { border-top-color: #8c8c1e; }
.st {
    font-family: "Liberation Sans", sans-serif;
    font-size: 12px;
    color: #222;
}
/* the status column text is squeezed horizontally in the sheet */
.st .dd span {
    flex: none;
    width: 130px;
    margin: 0 -12px;
    transform: scaleX(.82);
}
.failed.failed { background: #ff5050; box-shadow: none; color: #5a1010; }
.failed .dd .caret { border-top-color: #8c1f1f; }
.hired.hired { background: #a9d18e; box-shadow: none; color: #2c4a1e; }
.hired .dd .caret { border-top-color: #4f7a3a; }
.proc.proc { background: #ffd966; box-shadow: none; color: #33290a; }
.proc .dd .caret { border-top-color: #a8862a; }
.inter.inter { background: #f4b183; box-shadow: none; color: #4a2c14; }
.inter .dd .caret { border-top-color: #ad6a30; }

.handle {
    position: absolute;
    left: 1442px;
    top: 64px;
    width: 7px;
    height: 7px;
    border-radius: 50%;
    background: #1558d6;
}
.vscroll {
    width: 9px;
    background: #fff;
    border-left: 1px solid #efefef;
    position: relative;
    border-top: 1px solid #c7c7c7;
}
.vthumb {
    position: absolute;
    top: 20px;
    left: 1px;
    width: 7px;
    height: 20px;
    border-radius: 3px;
    background: #dadce0;
}
.varrow {
    position: absolute;
    left: 1px;
    width: 0;
    height: 0;
    border-left: 3px solid transparent;
    border-right: 3px solid transparent;
}
.varrow.up {
    top: 590px;
    border-bottom: 4px solid #9aa0a6;
}
.varrow.down {
    top: 604px;
    border-top: 4px solid #9aa0a6;
}
.hscroll {
    height: 11px;
    flex: none;
    background: #fff;
    border-bottom: 1px solid #e3e3e3;
    position: relative;
}
.hthumb {
    position: absolute;
    left: 39px;
    top: 2px;
    width: 999px;
    height: 7px;
    border-radius: 4px;
    background: #dadce0;
}
.harrow {
    position: absolute;
    top: 3px;
    width: 0;
    height: 0;
    border-top: 3px solid transparent;
    border-bottom: 3px solid transparent;
}
.harrow.left {
    left: 1461px;
    border-right: 4px solid #9aa0a6;
}
.harrow.right {
    left: 1475px;
    border-left: 4px solid #9aa0a6;
}

/* side panel */
.side {
    flex: 1;
    display: flex;
    flex-direction: column;
    align-items: center;
    padding-top: 10px;
    gap: 29.5px;
}
.cal-num {
    font-family: Roboto, sans-serif;
    font-size: 7px;
    font-weight: 700;
    fill: #4285f4;
    text-anchor: middle;
}
.side-sep {
    width: 17px;
    height: 1px;
    background: #dadce0;
    margin: -2px 0 -1px;
}

/* sheet tabs */
.sheetbar {
    height: 29px;
    flex: none;
    display: flex;
    align-items: center;
    background: #f9fbfd;
    padding-left: 44px;
}
.sb-ico.menu {
    margin-left: 22px;
}
.sheet-tab {
    margin-left: 19px;
    width: 73px;
    height: 28px;
    background: #e1e9f7;
    display: flex;
    align-items: center;
    gap: 8px;
    padding-left: 10px;
    font-family: Roboto, sans-serif;
    font-size: 12px;
    font-weight: 700;
    letter-spacing: .2px;
    color: #1a5fd0;
}
.sheet-tab .caret {
    border-top-color: #1a5fd0;
}
.sb-chev {
    margin-left: auto;
    margin-right: 20px;
    margin-bottom: 14px;
}
.bottom-edge {
    height: 2px;
    flex: none;
    background: #000;
}
```
